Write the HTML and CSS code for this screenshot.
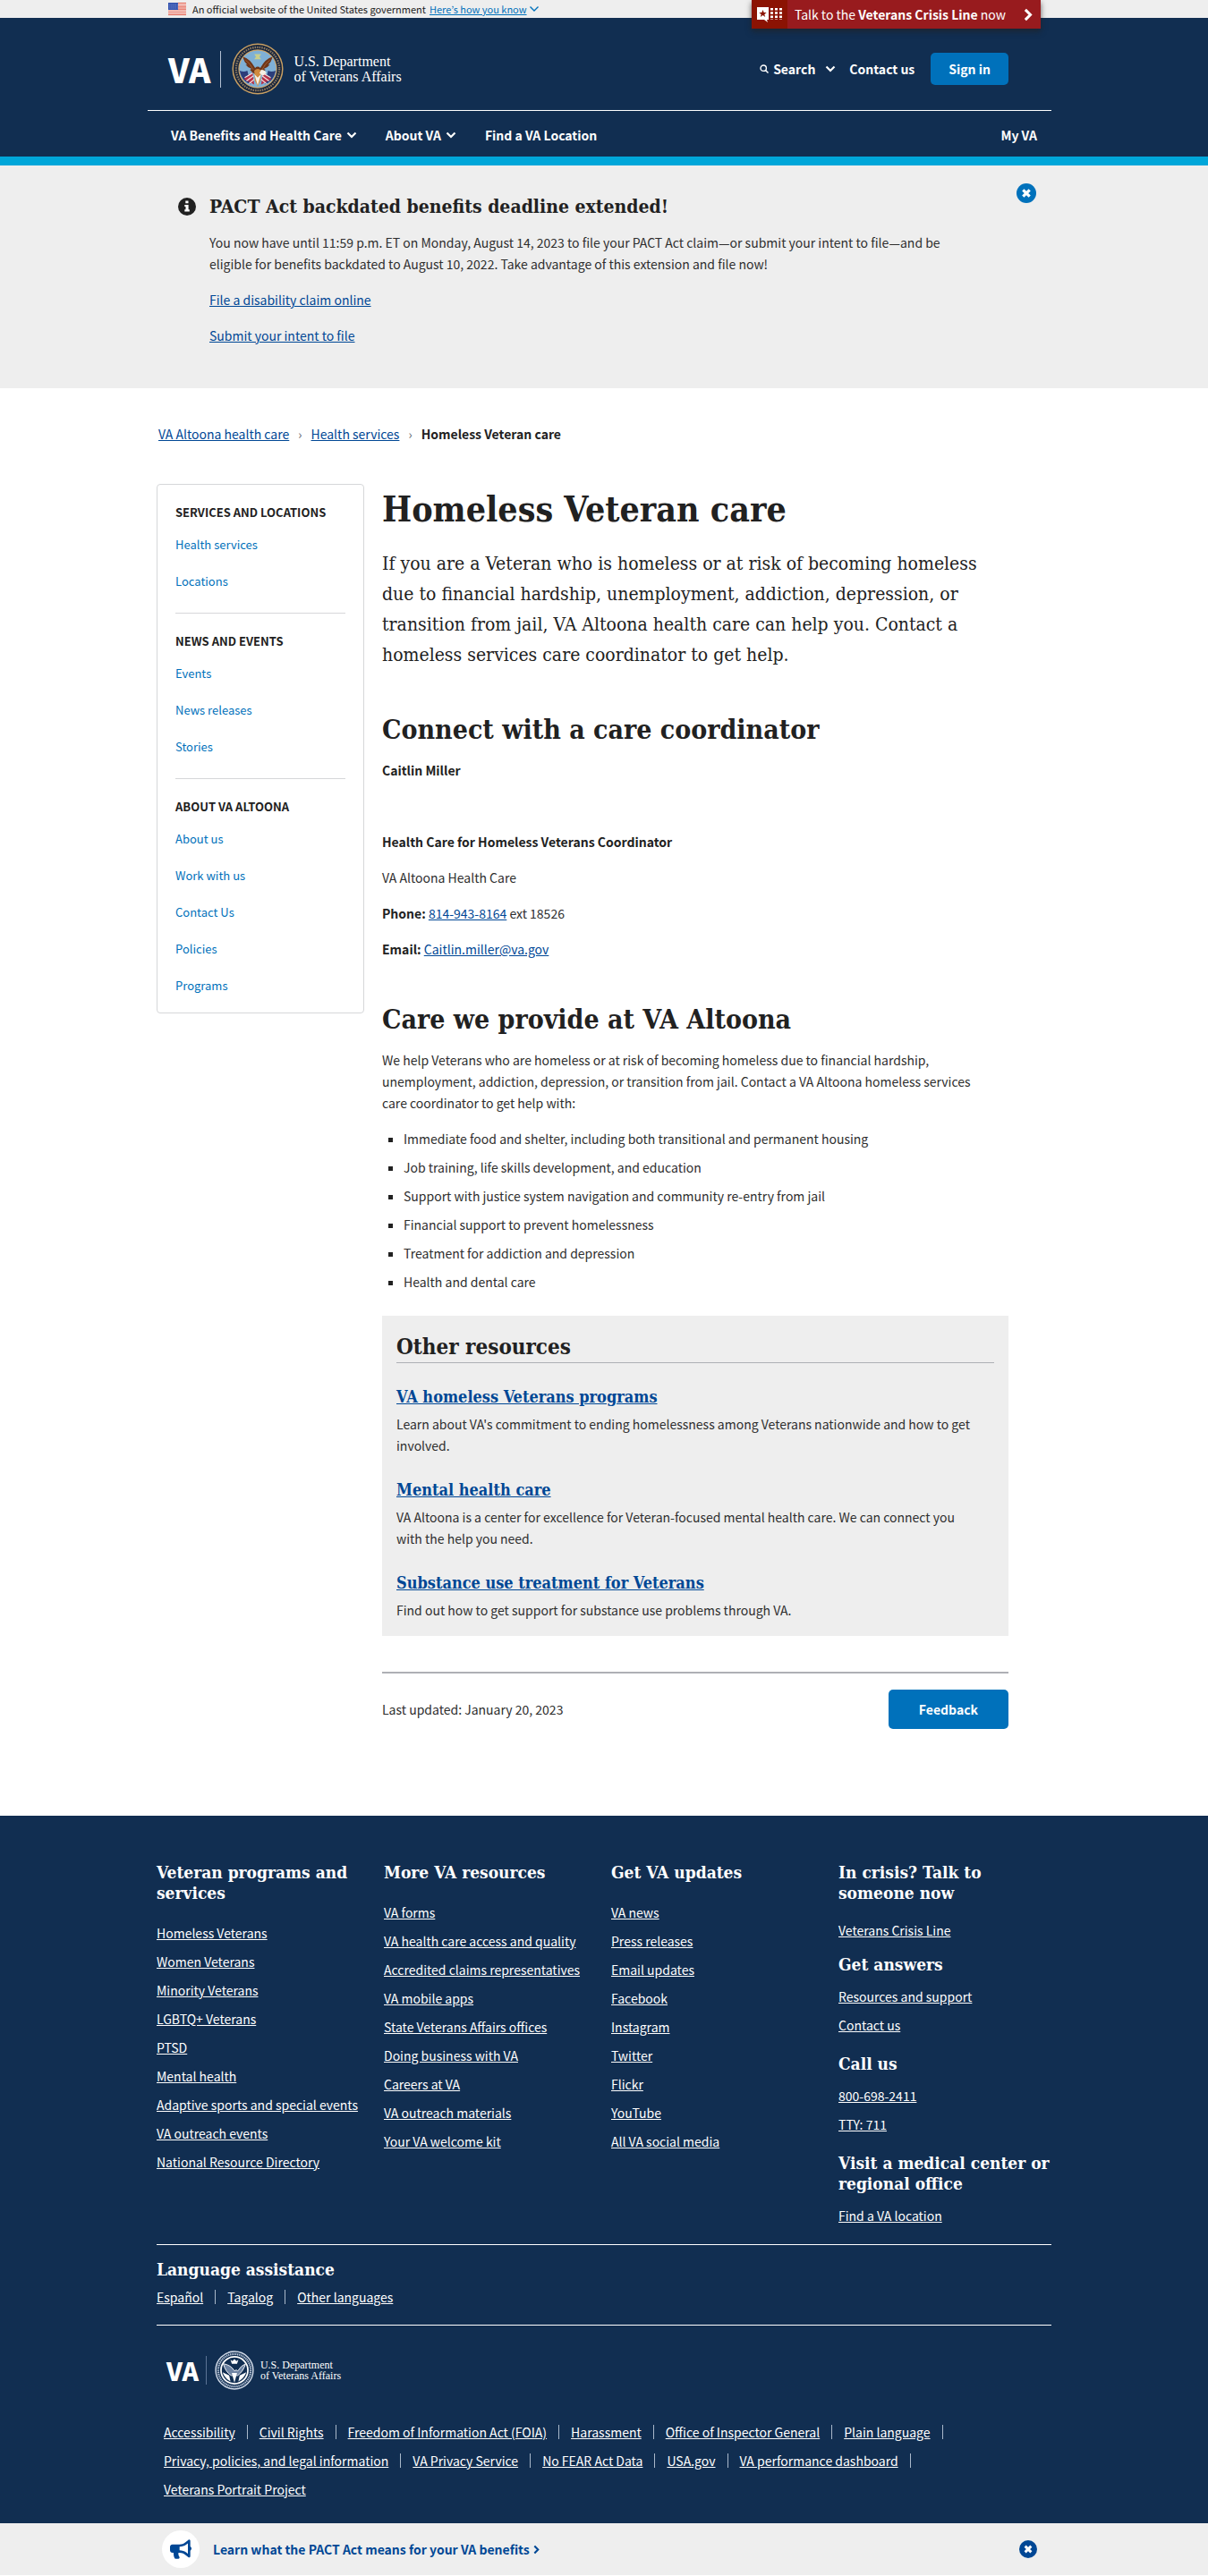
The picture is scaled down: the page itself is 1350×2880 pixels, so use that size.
FILE: index.html
```html
<!DOCTYPE html>
<html lang="en">
<head>
<meta charset="utf-8">
<meta name="viewport" content="width=device-width, initial-scale=1">
<title>Homeless Veteran care | VA Altoona health care</title>
<link rel="stylesheet" href="styles.css">
</head>
<body>
<svg class="sprite" aria-hidden="true">
  <symbol id="chevron" viewBox="0 0 12 8"><path d="M1.5 1.5 6 6l4.500-4.500" fill="none" stroke="currentColor" stroke-width="2.200"/></symbol>
  <symbol id="chevron-thin" viewBox="0 0 12 8"><path d="M1.500 1.500 6 6l4.500-4.500" fill="none" stroke="currentColor" stroke-width="1.400"/></symbol>
  <symbol id="arrow" viewBox="0 0 8 12"><path d="M1.500 1.500 6 6l-4.500 4.500" fill="none" stroke="currentColor" stroke-width="2.400"/></symbol>
  <symbol id="close" viewBox="0 0 22 22"><circle cx="11" cy="11" r="11" fill="currentColor"/><path d="m7.300 7.300 7.400 7.400m0-7.400-7.400 7.400" stroke="#fff" stroke-width="3.200"/></symbol>
  <symbol id="seal" viewBox="0 0 60 60">
    <circle cx="30" cy="30" r="29.500" fill="#c89f62"/>
    <circle cx="30" cy="30" r="28" fill="#16243c"/>
    <circle cx="30" cy="30" r="25" fill="none" stroke="#8d7a60" stroke-width="2.400" stroke-dasharray="1.600 1.100"/>
    <circle cx="30" cy="30" r="22.400" fill="#cfa466"/>
    <circle cx="30" cy="30" r="21.200" fill="#7fb0d6"/>
    <path d="M9 32q5 2 9 0l4 16q-10-3-13-16zM51 32q-5 2-9 0l-4 16q10-3 13-16z" fill="#2b3d7a"/>
    <path d="M14 42l10-8 2 14zM46 42l-10-8-2 14z" fill="#b8324a"/>
    <path d="M15 40l9-5M17 44l8-6M20 47l6-5M45 40l-9-5M43 44l-8-6M40 47l-6-5" stroke="#f4e4e0" stroke-width="1.200"/>
    <path d="M13 16q1 6 5 9l-2 0q3 4 7 5l-2 1q3 4 6 5h6q3-1 6-5l-2-1q4-1 7-5l-2 0q4-3 5-9-8 2-14 13-3-3-6 0-6-11-14-13z" fill="#6d3519"/>
    <path d="M16 20q5 3 9 11M44 20q-5 3-9 11" stroke="#a35f32" stroke-width="1" fill="none"/>
    <path d="M26 13h8l-2 3 2 3h-8l2-3z" fill="#c9cf8d"/>
    <path d="M26 32q4-4 8 0l-1 12-3 6-3-6z" fill="#d08a3e"/>
    <path d="M34 31q5 0 6 4l-4 3-4-3zM26 36l4 13 4-13-4 4z" fill="#f6efe4"/>
  </symbol>
  <symbol id="seal-mono" viewBox="0 0 60 60">
    <circle cx="30" cy="30" r="28.500" fill="none" stroke="#cfd8e6" stroke-width="2"/>
    <circle cx="30" cy="30" r="24.800" fill="none" stroke="#b3c0d3" stroke-width="3" stroke-dasharray="1.800 1"/>
    <circle cx="30" cy="30" r="20.500" fill="none" stroke="#fff" stroke-width="2.400"/>
    <path d="M13 20q3 12 12 18h10q9-7 12-18-7 3-12 11-2-3-5 0-5-9-17-11z" fill="#6f84a3" stroke="#fff" stroke-width="1.200"/>
    <path d="M12 33q3 9 12 14l-2-9zM48 33q-3 9-12 14l2-9zM26 34l4 15 4-15z" fill="#fff"/>
    <path d="m24 14 3 2 3-3 3 3 3-2-2 6h-8z" fill="#fff"/>
  </symbol>
</svg>

<div class="gov-banner">
  <div class="container gov-inner">
    <svg class="flag" viewBox="0 0 20 14" aria-hidden="true">
      <rect width="20" height="14" fill="#fff"/>
      <path d="M0 .500h20M0 2.700h20M0 4.900h20M0 7.100h20M0 9.300h20M0 11.500h20M0 13.500h20" stroke="#e0523f" stroke-width="1.100"/>
      <rect width="11" height="8" fill="#2f4fae"/>
      <path d="M1.500 2h9M1.500 4h9M1.500 6h9" stroke="#c9d3f0" stroke-width=".8" stroke-dasharray=".8 1.300"/>
    </svg>
    <span>An official website of the United States government</span>
    <button type="button" class="how-link"><span>Here’s how you know</span><svg class="how-chevron" aria-hidden="true"><use href="#chevron-thin"/></svg></button>
    <a class="crisis" href="#crisis">
      <span class="crisis-icon"><svg viewBox="0 0 28 18" aria-hidden="true">
        <path d="M0 1h13v14h-2l1 3-4-3H0z" fill="#fff"/>
        <path d="m6.500 4 1.200 3h3L8.300 8.900l.9 3-2.700-1.800-2.700 1.800.9-3L2.300 7h3z" fill="#8b1303"/>
        <path d="M16.500 2v13M21.500 2v13M26.500 2v13" stroke="#fff" stroke-width="3" stroke-dasharray="2.600 1.600"/>
      </svg></span>
      <span class="crisis-text">Talk to the <strong>Veterans Crisis Line</strong> now</span>
      <svg class="crisis-arrow" aria-hidden="true"><use href="#arrow"/></svg>
    </a>
  </div>
</div>

<header class="site-header">
  <div class="container">
    <div class="masthead">
      <a class="logo" href="#home">
        <span class="logo-va">VA</span>
        <svg class="logo-seal" aria-hidden="true"><use href="#seal"/></svg>
        <span class="logo-name">U.S. Department<br>of Veterans Affairs</span>
      </a>
      <div class="tools">
        <button type="button" class="tool search"><svg class="search-icon" viewBox="0 0 10 10" aria-hidden="true"><circle cx="4.200" cy="4.200" r="3.200" fill="none" stroke="currentColor" stroke-width="1.400"/><path d="m6.500 6.500 3 3" stroke="currentColor" stroke-width="1.500"/></svg><span>Search</span><svg class="chevron" aria-hidden="true"><use href="#chevron"/></svg></button>
        <a class="tool" href="#contact">Contact us</a>
        <button type="button" class="btn sign-in">Sign in</button>
      </div>
    </div>
    <nav class="main-nav" aria-label="Main">
      <button type="button" class="tool">VA Benefits and Health Care<svg class="chevron" aria-hidden="true"><use href="#chevron"/></svg></button>
      <button type="button" class="tool">About VA<svg class="chevron" aria-hidden="true"><use href="#chevron"/></svg></button>
      <a class="tool" href="#find">Find a VA Location</a>
      <a class="tool my-va" href="#my-va">My VA</a>
    </nav>
  </div>
</header>

<section class="alert">
  <div class="container alert-inner">
    <svg class="alert-icon" viewBox="0 0 20 20" aria-hidden="true"><circle cx="10" cy="10" r="10" fill="#212121"/><path d="M8.300 3.600h3.200v2.700H8.300zM7.300 8h4.300v5.300h1.200v2.200H7.300v-2.200h1.200v-3.200H7.300z" fill="#fff"/></svg>
    <div class="alert-body">
      <h2 class="alert-title">PACT Act backdated benefits deadline extended!</h2>
      <p>You now have until 11:59 p.m. ET on Monday, August 14, 2023 to file your PACT Act claim—or submit your intent to file—and be eligible for benefits backdated to August 10, 2022. Take advantage of this extension and file now!</p>
      <p><a href="#claim">File a disability claim online</a></p>
      <p><a href="#intent">Submit your intent to file</a></p>
    </div>
    <button type="button" class="close" aria-label="Close alert"><svg aria-hidden="true"><use href="#close"/></svg></button>
  </div>
</section>

<div class="container">
  <nav class="breadcrumb" aria-label="Breadcrumb">
    <a href="#altoona">VA Altoona health care</a><span class="sep">›</span><a href="#services">Health services</a><span class="sep">›</span><strong>Homeless Veteran care</strong>
  </nav>

  <div class="columns">
    <nav class="sidebar" aria-label="VA Altoona">
      <section>
        <h2>Services and locations</h2>
        <ul><li><a href="#s1">Health services</a></li><li><a href="#s2">Locations</a></li></ul>
      </section>
      <section>
        <h2>News and events</h2>
        <ul><li><a href="#s3">Events</a></li><li><a href="#s4">News releases</a></li><li><a href="#s5">Stories</a></li></ul>
      </section>
      <section>
        <h2>About VA Altoona</h2>
        <ul><li><a href="#s6">About us</a></li><li><a href="#s7">Work with us</a></li><li><a href="#s8">Contact Us</a></li><li><a href="#s9">Policies</a></li><li><a href="#s10">Programs</a></li></ul>
      </section>
    </nav>

    <main class="content">
      <h1>Homeless Veteran care</h1>
      <p class="intro">If you are a Veteran who is homeless or at risk of becoming homeless due to financial hardship, unemployment, addiction, depression, or transition from jail, VA Altoona health care can help you. Contact a homeless services care coordinator to get help.</p>

      <h2>Connect with a care coordinator</h2>
      <p class="person"><strong>Caitlin Miller</strong></p>
      <p><strong>Health Care for Homeless Veterans Coordinator</strong></p>
      <p>VA Altoona Health Care</p>
      <p><strong>Phone:</strong> <a href="tel:8149438164">814-943-8164</a> ext 18526</p>
      <p><strong>Email:</strong> <a href="mailto:Caitlin.miller@va.gov">Caitlin.miller@va.gov</a></p>

      <h2>Care we provide at VA Altoona</h2>
      <p>We help Veterans who are homeless or at risk of becoming homeless due to financial hardship, unemployment, addiction, depression, or transition from jail. Contact a VA Altoona homeless services care coordinator to get help with:</p>
      <ul class="bullets">
        <li>Immediate food and shelter, including both transitional and permanent housing</li>
        <li>Job training, life skills development, and education</li>
        <li>Support with justice system navigation and community re-entry from jail</li>
        <li>Financial support to prevent homelessness</li>
        <li>Treatment for addiction and depression</li>
        <li>Health and dental care</li>
      </ul>

      <section class="resources">
        <h2>Other resources</h2>
        <h3><a href="#r1">VA homeless Veterans programs</a></h3>
        <p>Learn about VA's commitment to ending homelessness among Veterans nationwide and how to get involved.</p>
        <h3><a href="#r2">Mental health care</a></h3>
        <p>VA Altoona is a center for excellence for Veteran-focused mental health care. We can connect you with the help you need.</p>
        <h3><a href="#r3">Substance use treatment for Veterans</a></h3>
        <p>Find out how to get support for substance use problems through VA.</p>
      </section>

      <div class="updated">
        <span>Last updated: January 20, 2023</span>
        <button type="button" class="btn feedback">Feedback</button>
      </div>
    </main>
  </div>
</div>

<footer class="site-footer">
  <div class="container">
    <div class="footer-columns">
      <section>
        <h2>Veteran programs and services</h2>
        <ul><li><a href="#f">Homeless Veterans</a></li><li><a href="#f">Women Veterans</a></li><li><a href="#f">Minority Veterans</a></li><li><a href="#f">LGBTQ+ Veterans</a></li><li><a href="#f">PTSD</a></li><li><a href="#f">Mental health</a></li><li><a href="#f">Adaptive sports and special events</a></li><li><a href="#f">VA outreach events</a></li><li><a href="#f">National Resource Directory</a></li></ul>
      </section>
      <section>
        <h2>More VA resources</h2>
        <ul><li><a href="#f">VA forms</a></li><li><a href="#f">VA health care access and quality</a></li><li><a href="#f">Accredited claims representatives</a></li><li><a href="#f">VA mobile apps</a></li><li><a href="#f">State Veterans Affairs offices</a></li><li><a href="#f">Doing business with VA</a></li><li><a href="#f">Careers at VA</a></li><li><a href="#f">VA outreach materials</a></li><li><a href="#f">Your VA welcome kit</a></li></ul>
      </section>
      <section>
        <h2>Get VA updates</h2>
        <ul><li><a href="#f">VA news</a></li><li><a href="#f">Press releases</a></li><li><a href="#f">Email updates</a></li><li><a href="#f">Facebook</a></li><li><a href="#f">Instagram</a></li><li><a href="#f">Twitter</a></li><li><a href="#f">Flickr</a></li><li><a href="#f">YouTube</a></li><li><a href="#f">All VA social media</a></li></ul>
      </section>
      <section class="help">
        <h2>In crisis? Talk to someone now</h2>
        <ul class="single"><li><a href="#f">Veterans Crisis Line</a></li></ul>
        <h2>Get answers</h2>
        <ul><li><a href="#f">Resources and support</a></li><li><a href="#f">Contact us</a></li></ul>
        <h2>Call us</h2>
        <ul><li><a href="#f">800-698-2411</a></li><li><a href="#f">TTY: 711</a></li></ul>
        <h2>Visit a medical center or regional office</h2>
        <ul><li><a href="#f">Find a VA location</a></li></ul>
      </section>
    </div>

    <section class="languages">
      <h2>Language assistance</h2>
      <ul class="inline"><li><a href="#f">Español</a></li><li><a href="#f">Tagalog</a></li><li><a href="#f">Other languages</a></li></ul>
    </section>

    <a class="logo small" href="#home">
      <span class="logo-va">VA</span>
      <svg class="logo-seal" aria-hidden="true"><use href="#seal-mono"/></svg>
      <span class="logo-name">U.S. Department<br>of Veterans Affairs</span>
    </a>

    <ul class="inline policies"><li><a href="#f">Accessibility</a></li><li><a href="#f">Civil Rights</a></li><li><a href="#f">Freedom of Information Act (FOIA)</a></li><li><a href="#f">Harassment</a></li><li><a href="#f">Office of Inspector General</a></li><li><a href="#f">Plain language</a></li><li><a href="#f">Privacy, policies, and legal information</a></li><li><a href="#f">VA Privacy Service</a></li><li><a href="#f">No FEAR Act Data</a></li><li><a href="#f">USA.gov</a></li><li><a href="#f">VA performance dashboard</a></li><li><a href="#f">Veterans Portrait Project</a></li></ul>
  </div>
</footer>

<aside class="promo">
  <div class="container promo-inner">
    <span class="promo-icon"><svg viewBox="0 0 576 512" aria-hidden="true"><path fill="currentColor" d="M576 240c0-23.630-12.950-44.040-32-55.120V32.010C544 23.260 537.020 0 512 0c-7.120 0-14.190 2.380-19.980 7.020l-85.030 68.030C364.280 109.190 310.660 128 256 128H64c-35.350 0-64 28.650-64 64v96c0 35.350 28.650 64 64 64h33.700c-1.390 10.480-2.180 21.140-2.180 32 0 39.770 9.260 77.350 25.560 110.940 5.190 10.690 16.520 17.060 28.400 17.060h74.280c26.050 0 41.690-29.840 25.900-50.560-16.400-21.520-26.150-48.360-26.150-77.440 0-11.110 1.620-21.790 4.410-32H256c54.660 0 108.280 18.810 150.980 52.950l85.030 68.030a32.023 32.023 0 0 0 19.980 7.020c24.920 0 32-22.780 32-32V295.130C563.050 284.040 576 263.630 576 240zm-96 141.420l-33.050-26.440C392.950 311.780 325.120 288 256 288v-96c69.120 0 136.950-23.780 190.950-66.980L480 98.580v282.840z"/></svg></span>
    <a class="promo-link" href="#pact">Learn what the PACT Act means for your VA benefits<svg class="promo-arrow" aria-hidden="true"><use href="#arrow"/></svg></a>
    <button type="button" class="close" aria-label="Dismiss announcement"><svg aria-hidden="true"><use href="#close"/></svg></button>
  </div>
</aside>
</body>
</html>
```
FILE: styles.css
```css
:root {
  --sans: "Noto Sans CJK KR", "Open Sans", sans-serif;
  --slab: "DejaVu Serif Condensed", "DejaVu Serif", serif;
  --navy: #112e51;
  --blue: #0071bb;
  --link: #004795;
  --gray: #eeeeee;
  --ink: #212121;
}

* { box-sizing: border-box; }

body {
  margin: 0;
  background: #fff;
  color: #2e2e2e;
  font: 14px/24px var(--sans);
}

h1, h2, h3, p, ul { margin: 0; }
h1, h2, h3 { font-family: var(--slab); font-weight: 700; color: var(--ink); }
ul { padding: 0; list-style: none; }
a { color: var(--link); }
strong { color: var(--ink); }
button { border: 0; padding: 0; background: none; font: inherit; color: inherit; cursor: pointer; }
svg { display: block; flex: none; }

.sprite { position: absolute; width: 0; height: 0; }
.container { max-width: 1000px; margin: 0 auto; }

.btn {
  border-radius: 5px;
  background: var(--blue);
  color: #fff;
  font-weight: 700;
}

/* Government banner */
.gov-banner { background: var(--gray); color: #212121; font-size: 11px; line-height: 20px; }
.gov-inner { position: relative; display: flex; align-items: center; padding-left: 13px; }
.flag { width: 20px; height: 14px; margin-right: 7px; }
.how-link { display: flex; align-items: center; gap: 2px; margin-left: 4px; color: var(--blue); }
.how-link span { text-decoration: underline; }
.how-chevron { width: 12px; height: 8px; }

.crisis {
  position: absolute;
  top: 0;
  right: 12px;
  display: flex;
  align-items: center;
  height: 32px;
  background: #981b1e;
  box-shadow: 0 3px 6px rgba(33, 33, 33, .7);
  color: #fff;
  font-size: 14px;
  line-height: 32px;
  text-decoration: none;
}
.crisis strong { color: #fff; }
.crisis-icon { display: flex; align-items: center; align-self: stretch; padding: 0 6px; background: #8b1303; }
.crisis-icon svg { width: 28px; height: 18px; }
.crisis-text { padding: 0 20px 0 8px; }
.crisis-arrow { width: 10px; height: 15px; margin-right: 9px; }

/* Header */
.site-header { border-bottom: 10px solid #00a6d9; background: var(--navy); color: #fff; }
.masthead {
  display: flex;
  align-items: center;
  justify-content: space-between;
  height: 104px;
  margin-left: -10px;
  padding: 11px 48px 0 23px;
  border-bottom: 1px solid #fff;
}

.logo { display: flex; align-items: center; color: #fff; text-decoration: none; }
.logo-va {
  margin-right: 12px;
  padding-right: 11px;
  border-right: 1px solid #b3c0d3;
  font-size: 37px;
  font-weight: 900;
  line-height: 41px;
}
.logo-seal { width: 58px; height: 58px; margin-right: 11px; }
.logo-name { font-family: "Liberation Serif", serif; font-size: 16px; line-height: 17px; }

.tools { display: flex; align-items: center; }
.tool { display: flex; align-items: center; color: #fff; font-weight: 700; text-decoration: none; }
.chevron { width: 12px; height: 8px; margin-left: 5px; }
.search-icon { width: 10px; height: 10px; margin-right: 5px; }
.search { margin-right: 15px; }
.search .chevron { margin-left: 11px; }
.sign-in { margin-left: 18px; padding: 6px 20px; }

.main-nav { display: flex; gap: 32px; padding: 15px 16px 12px; }
.my-va { margin-left: auto; }

/* Alert */
.alert { background: var(--gray); }
.alert-inner { display: flex; align-items: flex-start; padding: 20px 17px 31px 24px; }
.alert-icon { width: 20px; height: 20px; margin: 16px 15px 0 0; }
.alert-body { flex: 1; max-width: 854px; padding-top: 12px; }
.alert-title { margin-bottom: 14px; font-size: 21px; line-height: 28px; }
.alert p { margin-bottom: 16px; }
.close { margin-left: auto; }
.alert .close { color: var(--blue); }
.close svg { width: 22px; height: 22px; }

/* Breadcrumb */
.breadcrumb { padding: 39px 2px 44px; }
.sep { margin: 0 10px; color: #5b616b; }

/* Page columns */
.columns { display: grid; grid-template-columns: 232px minmax(0, 700px); gap: 20px; align-items: start; padding-bottom: 97px; }

.sidebar {
  padding: 0 20px 18px;
  border: 1px solid #d6d7d9;
  border-radius: 4px;
  font-size: 13px;
}
.sidebar section { padding: 19px 0 23px; }
.sidebar section + section { border-top: 1px solid #d6d7d9; }
.sidebar section:last-child { padding-bottom: 0; }
.sidebar h2 {
  margin-bottom: 12px;
  font: 700 13px/24px var(--sans);
  text-transform: uppercase;
}
.sidebar li + li { margin-top: 17px; }
.sidebar a { color: var(--blue); text-decoration: none; }

.content h1 { margin-bottom: 16px; font-size: 39px; line-height: 56px; }
.content > h2 { margin: 47px 0 14px; font-size: 30px; line-height: 39px; }
.content > p { margin-bottom: 16px; padding-right: 16px; }
.content > .intro { color: var(--ink); font: 21px/34px var(--slab); }
.content > .person { margin-bottom: 56px; }

.bullets { padding-left: 24px; list-style: square; }
.bullets li { margin-bottom: 8px; }
.bullets li::marker { color: var(--ink); }

.resources { margin-top: 26px; padding: 18px 16px 17px; background: var(--gray); }
.resources h2 { border-bottom: 1px solid #aeb0b5; font-size: 24px; line-height: 34px; }
.resources h3 { margin: 26px 0 6px; font-size: 18px; line-height: 24px; }
.resources p { padding-right: 16px; }

.updated {
  display: flex;
  align-items: center;
  justify-content: space-between;
  margin-top: 40px;
  padding-top: 18px;
  border-top: 2px solid #aeb0b5;
}
.feedback { padding: 10px 34px; }

/* Footer */
.site-footer { background: var(--navy); color: #fff; }
.site-footer a { color: #fff; }
.site-footer h2 { color: #fff; font-size: 19px; line-height: 23px; }
.footer-columns {
  display: grid;
  grid-template-columns: repeat(4, minmax(0, 238px));
  gap: 16px;
  padding: 52px 0 12px;
  border-bottom: 1px solid #fff;
}
.footer-columns h2 { margin-bottom: 21px; }
.footer-columns li { margin-bottom: 8px; }
.help h2 { margin-bottom: 12px; }
.help h2:first-child { margin-bottom: 18px; }
.help ul { padding-bottom: 12px; }
.help .single { padding-bottom: 7px; }
.help ul:last-child { padding-bottom: 0; }

.languages { padding: 16px 0 19px; border-bottom: 1px solid #fff; }
.languages h2 { margin-bottom: 7px; }
.inline { display: flex; flex-wrap: wrap; row-gap: 8px; }
.inline li { display: flex; align-items: center; }
.inline li:not(:last-child)::after {
  content: "";
  width: 1px;
  height: 16px;
  margin: 0 13px;
  background: #a9b8ca;
}

.small { padding: 28px 11px 0; }
.small .logo-va { margin-right: 9px; padding-right: 8px; border-color: #5b7395; font-size: 28px; line-height: 32px; }
.small .logo-seal { width: 44px; height: 44px; margin-right: 7px; }
.small .logo-name { font-size: 12px; line-height: 12px; }
.policies { padding: 35px 8px 26px; }

/* Promo bar */
.promo { background: var(--gray); }
.promo-inner { display: flex; align-items: center; height: 58px; padding: 0 16px 0 6px; }
.promo-icon {
  display: grid;
  place-items: center;
  width: 42px;
  height: 42px;
  margin-right: 15px;
  border-radius: 50%;
  background: #fff;
  color: var(--link);
}
.promo-icon svg { width: 24px; height: 22px; }
.promo-link { display: flex; align-items: center; gap: 4px; font-weight: 700; text-decoration: none; }
.promo-arrow { width: 7px; height: 11px; }
.promo .close { color: var(--link); }
.promo .close svg { width: 20px; height: 20px; }
```
